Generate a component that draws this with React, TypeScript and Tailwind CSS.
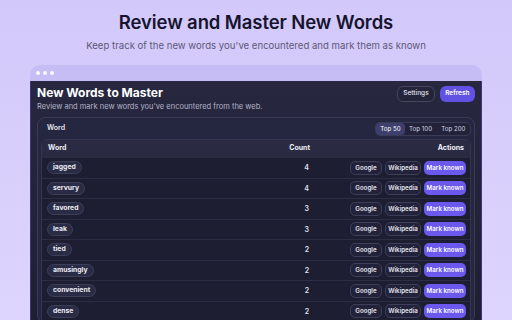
import React from "react";

const rows: [string, number][] = [
  ["jagged", 4],
  ["servury", 4],
  ["favored", 3],
  ["leak", 3],
  ["tied", 2],
  ["amusingly", 2],
  ["convenient", 2],
  ["dense", 2],
];

export default function App() {
  return (
    <div
      className="w-[512px] h-[320px] overflow-hidden flex flex-col items-center bg-gradient-to-b from-[#d2c8fa] to-[#ddd5fd]"
      style={{ fontFamily: "Inter, 'Noto Sans', sans-serif" }}
    >
      <h1 className="mt-[9px] text-[18.5px] leading-[26px] font-semibold text-[#16142e] tracking-[-0.1px]">
        Review and Master New Words
      </h1>
      <p className="mt-[4px] text-[9.6px] leading-[14px] text-[#5d5878]">
        Keep track of the new words you've encountered and mark them as known
      </p>
      <div className="mt-[12px] w-[452px] flex flex-col shrink-0">
        <div className="h-[16px] rounded-t-[10px] bg-[#c6bdf4] flex items-center gap-[3px] pl-[6px]">
          <span className="w-[4px] h-[4px] rounded-full bg-white/90" />
          <span className="w-[4px] h-[4px] rounded-full bg-white/90" />
          <span className="w-[4px] h-[4px] rounded-full bg-white/90" />
        </div>
        <div className="h-[240px] bg-gradient-to-b from-[#272740] to-[#1e1f33] px-[6px] pt-[4px] border-x border-[#3d3970]">
          <div className="flex items-start justify-between">
            <div className="flex flex-col">
              <div className="text-[12px] leading-[16px] font-bold text-white">New Words to Master</div>
              <div className="mt-[1px] text-[7.5px] leading-[10px] text-[#b4b4c6]">
                Review and mark new words you've encountered from the web.
              </div>
            </div>
            <div className="flex gap-[5px] pt-[1px]">
              <div className="h-[16px] px-[5px] rounded-[6px] border border-[#45465e] bg-[#24253a] text-[6.5px] text-[#e4e4ee] flex items-center font-medium">
                Settings
              </div>
              <div className="h-[16px] px-[5.5px] rounded-[6px] bg-[#6152e4] text-[6.5px] text-white flex items-center font-semibold">
                Refresh
              </div>
            </div>
          </div>
          <div className="mt-[5px] rounded-[8px] border border-[#3a3b55] bg-[#252640] px-[3px]">
            <div className="h-[21px] flex items-center justify-between pl-[6px]">
              <span className="text-[7px] font-semibold text-[#e8e8f2]">Word</span>
              <div className="h-[14px] flex items-center rounded-[5px] border border-[#3a3b55] bg-[#22233a] text-[6.2px] text-[#d8d8e6]">
                <span className="h-full px-[4px] flex items-center rounded-[4px] bg-[#3e3f6c] text-white">Top 50</span>
                <span className="h-full px-[4.5px] flex items-center">Top 100</span>
                <span className="h-full px-[4.5px] flex items-center">Top 200</span>
              </div>
            </div>
            <div className="rounded-t-[6px] border border-[#34354e] overflow-hidden bg-[#1d1e32]">
              <div className="h-[17px] bg-[#2a2b43] flex items-center text-[7px] font-bold text-[#f0f0f8]">
                <span className="pl-[6px] w-[210px]">Word</span>
                <span className="w-[58px] text-right">Count</span>
                <span className="flex-1 text-right pr-[6px]">Actions</span>
              </div>
              {rows.map(([w, c]) => (
                <div key={w} className="h-[20.5px] border-t border-[#2c2d44] flex items-center text-[6.2px] leading-none">
                  <div className="pl-[5px] w-[210px] flex">
                    <span className="inline-flex h-[13px] items-center px-[5px] rounded-full border border-[#3d3e58] bg-[#2a2b44] font-bold text-[6.8px] text-[#ececf6]">
                      {w}
                    </span>
                  </div>
                  <span className="w-[57px] text-right font-semibold text-[7px] text-[#e0e0ea]">{c}</span>
                  <div className="flex-1 flex justify-end gap-[3px] pr-[4px]">
                    <span className="h-[14px] w-[32px] flex items-center justify-center rounded-[5px] border border-[#3d3e58] bg-[#22233a] font-semibold text-[#e4e4ee]">
                      Google
                    </span>
                    <span className="h-[14px] w-[36px] flex items-center justify-center rounded-[5px] border border-[#3d3e58] bg-[#22233a] font-semibold text-[#e4e4ee]">
                      Wikipedia
                    </span>
                    <span className="h-[14px] w-[42px] flex items-center justify-center rounded-[5px] bg-[#6a59ec] font-semibold text-white">
                      Mark known
                    </span>
                  </div>
                </div>
              ))}
            </div>
          </div>
        </div>
      </div>
    </div>
  );
}
